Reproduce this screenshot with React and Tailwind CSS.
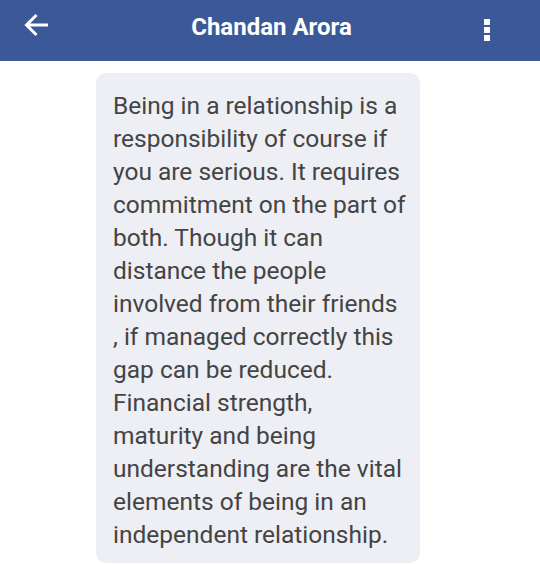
export default function App() {
  const message =
    "Being in a relationship is a responsibility of course if you are serious. It requires commitment on the part of both. Though it can distance the people involved from their friends , if managed correctly this gap can be reduced. Financial strength, maturity and being understanding are the vital elements of being in an independent relationship.";

  return (
    <div className="w-[540px] h-[564px] bg-white overflow-hidden" style={{ fontFamily: "Roboto, 'Noto Sans', sans-serif" }}>
      <div className="h-[61px] bg-[#3b5998] flex items-center justify-between pl-[24px] pr-[50px]">
        <svg width="25" height="24" viewBox="0 0 25 24" className="-mt-[12px]">
          <path d="M24 12H3M12.5 2 2.5 12l10 10" fill="none" stroke="white" strokeWidth="3" />
        </svg>
        <h1 className="text-white text-[24px] font-bold -mt-[8px] ml-[10px]">Chandan Arora</h1>
        <div className="flex flex-col gap-[2px] -mt-[1px]">
          <span className="w-[6px] h-[6px] bg-white" />
          <span className="w-[6px] h-[6px] bg-white" />
          <span className="w-[6px] h-[6px] bg-white" />
        </div>
      </div>
      <div className="pt-[12px] pl-[96px]">
        <div className="w-[324px] bg-[#eeeff4] rounded-[10px] pl-[17px] pr-[14px] pt-[16px] pb-[12px]">
          <p className="text-[24.5px] leading-[33px] text-[#444444]">{message}</p>
        </div>
      </div>
    </div>
  );
}
